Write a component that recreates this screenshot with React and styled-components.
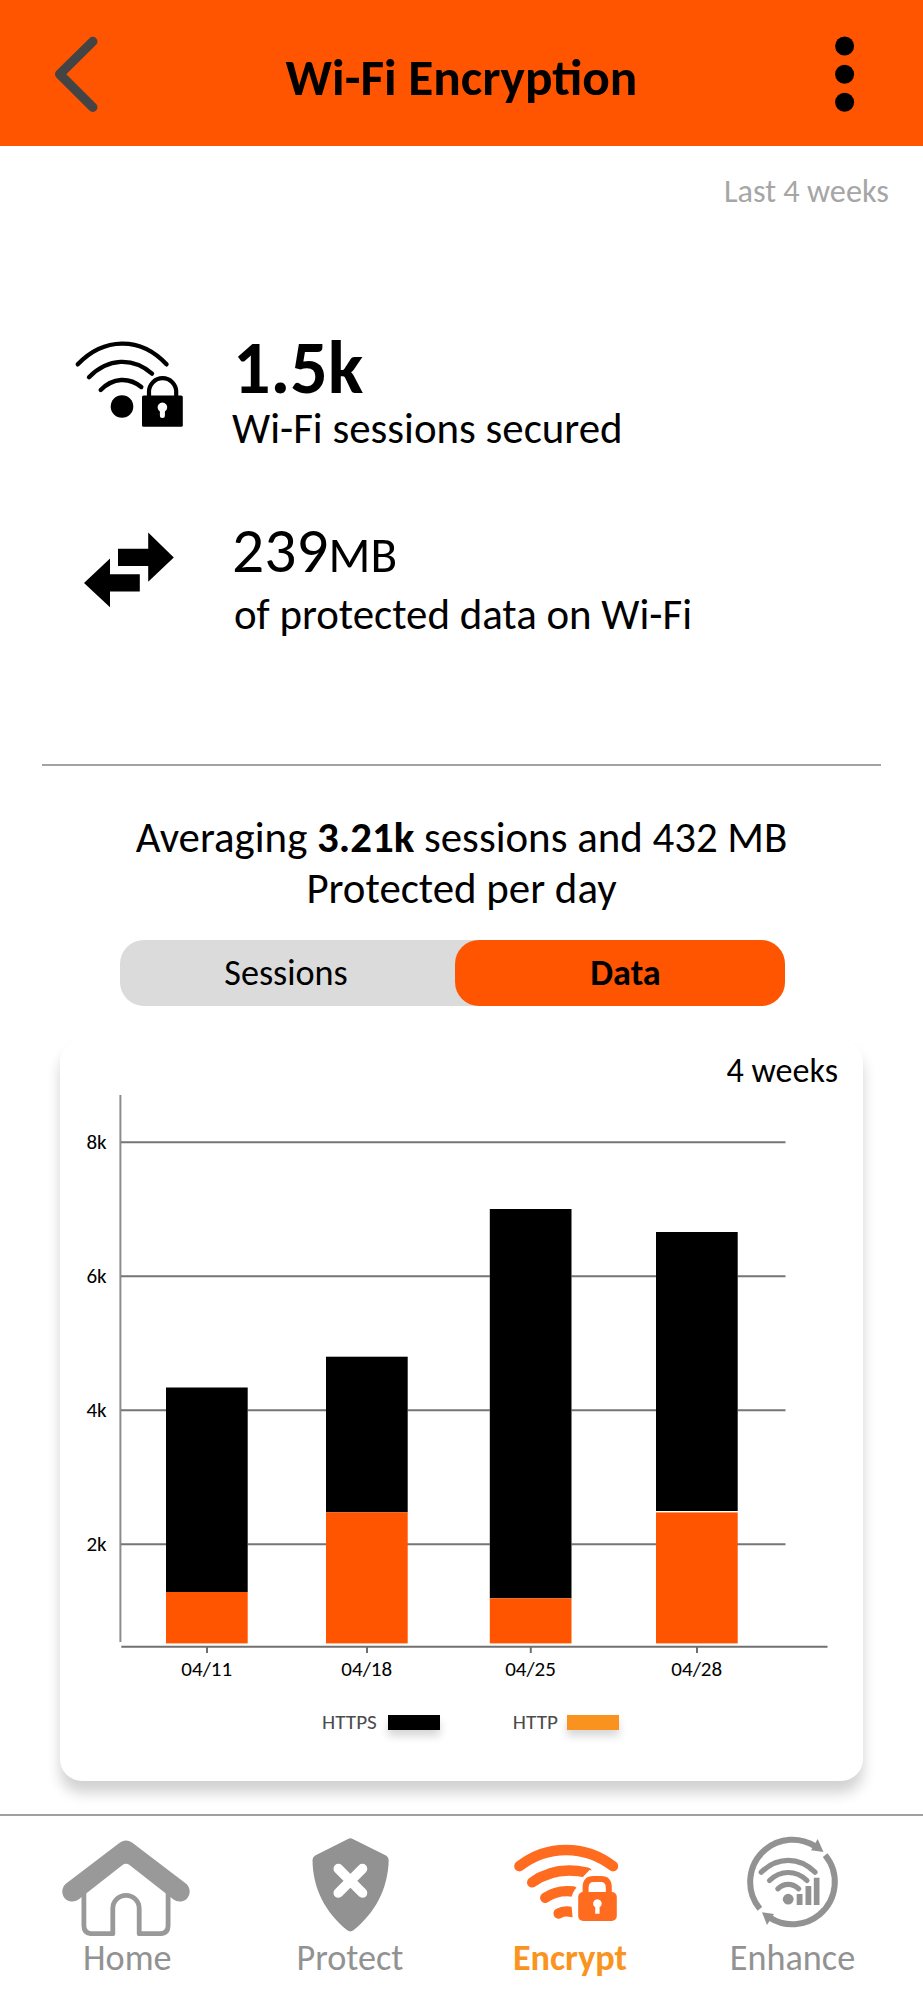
import React from "react";
import styled, { createGlobalStyle } from "styled-components";

const ORANGE = "#ff5500";
const GREY = "#929292";

const GlobalStyle = createGlobalStyle`
  * { box-sizing: border-box; }
  body {
    margin: 0;
    background: #fff;
    color: #000;
    font-family: Carlito, Calibri, Lato, sans-serif;
  }
`;

const Screen = styled.div`
  display: flex;
  flex-direction: column;
  width: 923px;
  height: 2000px;
  overflow: hidden;
`;

const Header = styled.header`
  display: grid;
  grid-template-columns: 110px 1fr 110px;
  height: 146px;
  background: ${ORANGE};
`;

const HeaderIcon = styled.svg`
  width: 110px;
  height: 146px;
`;

const Title = styled.h1`
  margin: 0;
  padding-top: 48px;
  text-align: center;
  font-size: 51.3px;
  line-height: 60px;
  font-weight: 700;
`;

const Period = styled.div`
  padding: 25px 34px 0 0;
  height: 104px;
  text-align: right;
  color: #a6a6a6;
  font-size: 32.3px;
  line-height: 40px;
`;

const Stats = styled.section`
  display: flex;
  flex-direction: column;
  height: 514px;
  padding: 70px 0 0 60px;
`;

const Stat = styled.div`
  display: grid;
  grid-template-columns: 172px 1fr;
  height: 186px;
`;

const StatIcon = styled.svg`
  width: 130px;
  height: 120px;
`;

const StatText = styled.div`
  display: flex;
  flex-direction: column;
`;

const StatValue = styled.div`
  height: 84px;
  line-height: 70px;
  padding: ${(p) => (p.$strong ? "13px 0 0 1px" : "10px 0 0 0")};
  font-size: ${(p) => (p.$strong ? 74 : 63.5)}px;
  font-weight: ${(p) => (p.$strong ? 700 : 400)};
`;

const Unit = styled.span`
  font-size: 49px;
`;

const StatLabel = styled.div`
  padding-left: ${(p) => p.$inset || 0}px;
  font-size: 42.9px;
  line-height: 50px;
`;

const Divider = styled.hr`
  width: 839px;
  height: 2px;
  margin: 0 0 0 42px;
  border: 0;
  background: #a3a3a3;
`;

const Summary = styled.p`
  margin: 46px 0 0;
  height: 128px;
  text-align: center;
  font-size: 42.9px;
  line-height: 51.3px;
`;

const Toggle = styled.div`
  display: flex;
  width: 665px;
  height: 66px;
  margin-left: 120px;
  border-radius: 24px;
  background: #dbdbdb;
`;

const ToggleOption = styled.button`
  flex: 0 0 ${(p) => (p.$active ? 330 : 335)}px;
  border: 0;
  border-radius: 24px;
  padding: ${(p) => (p.$active ? "0 0 0 11px" : "0 3px 0 0")};
  background: ${(p) => (p.$active ? ORANGE : "transparent")};
  color: #000;
  font-family: inherit;
  font-size: 36.2px;
  line-height: 66px;
  font-weight: ${(p) => (p.$active ? 700 : 400)};
`;

const Card = styled.section`
  width: 803px;
  height: 741px;
  margin: 34px 0 0 60px;
  border-radius: 22px;
  background: #fff;
  box-shadow: 0 12px 14px rgba(0, 0, 0, 0.18);
`;

const CardTitle = styled.div`
  height: 50px;
  padding: 10px 25px 0 0;
  text-align: right;
  font-size: 34.1px;
  line-height: 42px;
`;

const Plot = styled.svg`
  display: block;
  width: 803px;
  height: 600px;
  font-family: inherit;
  font-size: 21px;
`;

const Legend = styled.div`
  display: flex;
  align-items: center;
  gap: 73px;
  height: 64px;
  padding-left: 262px;
`;

const LegendItem = styled.div`
  display: flex;
  align-items: center;
  gap: ${(p) => p.$gap}px;
  color: #4c4c4c;
  font-size: 21.2px;
  line-height: 26px;
`;

const Swatch = styled.span`
  width: 52px;
  height: 15px;
  background: ${(p) => p.$color};
  box-shadow: 0 6px 9px rgba(0, 0, 0, 0.16);
`;

const NavBar = styled.nav`
  display: grid;
  grid-template-columns: 240px 220px 220px 225px;
  height: 186px;
  margin-top: 33px;
  border-top: 2px solid #a0a0a0;
`;

const NavItem = styled.a`
  display: flex;
  flex-direction: column;
  align-items: center;
  padding-left: ${(p) => p.$shift || 0}px;
  color: ${(p) => (p.$active ? "#fa9420" : GREY)};
  font-size: 36.2px;
  line-height: 44px;
  font-weight: ${(p) => (p.$active ? 700 : 400)};
`;

const NavIcon = styled.svg`
  width: 140px;
  height: 120px;
`;

const NavLabel = styled.span``;

/* Plot coordinates: origin is the plot's top-left corner inside the card. */
const GRID = [
  { label: "8k", y: 52 },
  { label: "6k", y: 186 },
  { label: "4k", y: 320 },
  { label: "2k", y: 454 },
];

const BARS = [
  { label: "04/11", x: 106, top: 297.5, blackEnd: 502, split: 502 },
  { label: "04/18", x: 266, top: 266.7, blackEnd: 422.3, split: 422.3 },
  { label: "04/25", x: 429.8, top: 119, blackEnd: 508.3, split: 508.3 },
  { label: "04/28", x: 596, top: 142, blackEnd: 421, split: 422.4 },
];

function Chart() {
  return (
    <Plot viewBox="0 0 803 600">
      <path d="M60.4 5V552" stroke="#8c8c8c" strokeWidth="2" />
      {GRID.map((g) => (
        <g key={g.label}>
          <path d={`M61 ${g.y + 0.3}H725.5`} stroke="#757575" strokeWidth="2.1" />
          <text x="46.6" y={g.y + 6.8} textAnchor="end">{g.label}</text>
        </g>
      ))}
      {BARS.map((b) => (
        <g key={b.label}>
          <rect x={b.x} y={b.top} width="81.7" height={b.split - b.top} fill="#fff" />
          <rect x={b.x} y={b.top} width="81.7" height={b.blackEnd - b.top} fill="#000" />
          <rect x={b.x} y={b.split} width="81.7" height={553.4 - b.split} fill={ORANGE} />
          <path d={`M${b.x + 41} 557V563`} stroke="#6f6f6f" strokeWidth="2" />
          <text x={b.x + 40.7} y="586" textAnchor="middle">{b.label}</text>
        </g>
      ))}
      <path d="M61.3 556.7H767.5" stroke="#707070" strokeWidth="2" />
    </Plot>
  );
}

function WifiLockIcon() {
  return (
    <StatIcon viewBox="60 320 130 120">
      <g fill="none" stroke="#000" strokeWidth="4.4" strokeLinecap="round">
        <path d="M77.8 364.3C103.5 337.5 140 336 166.5 364.3" />
        <path d="M89 377.2C108 357.8 133 357 152 373.6" />
        <path d="M100.7 390C113 377.5 129 377 141.3 387" />
        <path d="M149 397V391.8a13.6 13.6 0 0 1 27.2 0V397" strokeWidth="4.2" strokeLinecap="butt" />
      </g>
      <circle cx="122" cy="406.5" r="11.3" />
      <rect x="142" y="395.5" width="40.8" height="31.3" rx="1.6" />
      <path d="M159.9 411.4a4.8 4.8 0 1 1 5 0V415.5a2.5 2.5 0 0 1-5 0Z" fill="#fff" />
    </StatIcon>
  );
}

function TransferIcon() {
  return (
    <StatIcon viewBox="60 506 130 120">
      <path d="M118 548.7H148.2V532.5L173.8 557.4L148.2 581.7V566H118Z" />
      <path d="M139.8 574.3V591.6H110V607.3L84 583L110 558.6V574.3Z" />
    </StatIcon>
  );
}

function HomeIcon() {
  return (
    <NavIcon viewBox="56.5 1815.5 140 120">
      <path
        d="M83.4 1888V1926.5Q83.4 1934.7 91.6 1934.7H112.3V1909.5a13.2 13.2 0 0 1 26.4 0V1934.7H159.4Q167.6 1934.7 167.6 1926.5V1888"
        fill="none"
        stroke="#999"
        strokeWidth="4.8"
        strokeLinejoin="round"
        transform="translate(0 -1.5)"
      />
      <path
        d="M119.5 1842Q125.5 1837.8 131.5 1842L186 1883.5C190.5 1888 190 1894.5 186.2 1898.4C181.5 1902 176.5 1901.5 173 1899L129 1864.5Q125.5 1862.2 122 1864.5L78 1899C74.5 1901.5 69.5 1902 64.8 1898.4C61 1894.5 60.5 1888 65 1883.5Z"
        fill="#999"
      />
    </NavIcon>
  );
}

function ShieldIcon() {
  return (
    <NavIcon viewBox="280 1816 140 120">
      <path
        d="M348 1839Q350.4 1837.7 352.8 1839L386 1855.5Q388.7 1857 388.7 1860C388 1889 375 1913 353.5 1930.3Q350.4 1932.5 347.3 1930.3C325.8 1913 312.8 1889 312.5 1860Q312.5 1857 315.2 1855.5Z"
        fill={GREY}
      />
      <path d="M338.4 1868.7L362.4 1892.9M362.4 1868.7L338.4 1892.9" stroke="#fff" strokeWidth="9.8" strokeLinecap="round" />
    </NavIcon>
  );
}

function EncryptIcon() {
  return (
    <NavIcon viewBox="500 1816 140 120">
      <g fill="none" stroke="#ff6b1f" strokeWidth="10.4" strokeLinecap="round">
        <path d="M519.4 1866.2C547 1844.5 585 1844.5 613 1866.2" />
        <path d="M532.2 1882.4C549 1870 567 1868.2 587 1872.5" />
        <path d="M545.3 1897.8C555 1891 564 1890.3 573 1891.5" />
        <path d="M558.6 1913.5Q564 1910.3 572 1912" />
      </g>
      <path
        d="M589.5 1870L582 1878Q577.5 1882.5 577 1887Q572.5 1892 571.5 1897.5V1906L573 1921L594 1927L622 1925L620 1889L612 1873Z"
        fill="#fff"
      />
      <path d="M585.6 1894V1887.5Q585.6 1879 593.5 1879H601Q608.8 1879 608.8 1887.5V1894" fill="none" stroke="#ff6b1f" strokeWidth="6" />
      <rect x="578.2" y="1892" width="38.6" height="29" rx="5" fill="#ff6b1f" />
      <path d="M595.2 1907.3a4.3 4.3 0 1 1 4.4 0V1913.8H595.2Z" fill="#fff" />
    </NavIcon>
  );
}

function EnhanceIcon() {
  return (
    <NavIcon viewBox="722.5 1816 140 120">
      <g fill="none" stroke={GREY} strokeWidth="6">
        <circle cx="792" cy="1882" r="42.3" pathLength="360" strokeDasharray="161 199" transform="rotate(140.5 792 1882)" />
        <circle cx="792" cy="1882" r="42.3" pathLength="360" strokeDasharray="162 198" transform="rotate(-39.5 792 1882)" />
      </g>
      <path d="M817.2 1839L823 1852L810.5 1850.2Z" fill={GREY} />
      <path d="M761.5 1912.3L773.5 1914L766.5 1925Z" fill={GREY} />
      <g fill="none" stroke={GREY} strokeWidth="5.2" strokeLinecap="round">
        <path d="M760.7 1872.2C777 1856.5 798.5 1856.5 814.5 1872.2" />
        <path d="M769 1880.5C780 1869.8 795.5 1869.8 806.5 1880.5" />
        <path d="M777.3 1888.8C783.5 1882.8 792 1882.8 798.2 1888.8" />
      </g>
      <circle cx="787.7" cy="1899.2" r="5.4" fill={GREY} />
      <path d="M796.2 1894H802V1905H796.2ZM805 1886H810.8V1905H805ZM813.3 1877.7H819V1905H813.3Z" fill={GREY} />
    </NavIcon>
  );
}

export default function App() {
  return (
    <Screen>
      <GlobalStyle />
      <Header>
        <HeaderIcon viewBox="0 0 110 146">
          <path d="M92.8 41.5L59.7 74.2L92.8 107.3" fill="none" stroke="#444" strokeWidth="9.4" strokeLinecap="round" strokeLinejoin="round" />
        </HeaderIcon>
        <Title>Wi-Fi Encryption</Title>
        <HeaderIcon viewBox="813 0 110 146">
          <circle cx="844.6" cy="46" r="9.5" />
          <circle cx="844.6" cy="74.2" r="9.5" />
          <circle cx="844.6" cy="102.3" r="9.5" />
        </HeaderIcon>
      </Header>
      <Period>Last 4 weeks</Period>
      <Stats>
        <Stat>
          <WifiLockIcon />
          <StatText>
            <StatValue $strong>1.5k</StatValue>
            <StatLabel>Wi-Fi sessions secured</StatLabel>
          </StatText>
        </Stat>
        <Stat>
          <TransferIcon />
          <StatText>
            <StatValue>239<Unit>MB</Unit></StatValue>
            <StatLabel $inset={2}>of protected data on Wi-Fi</StatLabel>
          </StatText>
        </Stat>
      </Stats>
      <Divider />
      <Summary>
        Averaging <b>3.21k</b> sessions and 432 MB
        <br />
        Protected per day
      </Summary>
      <Toggle>
        <ToggleOption>Sessions</ToggleOption>
        <ToggleOption $active>Data</ToggleOption>
      </Toggle>
      <Card>
        <CardTitle>4 weeks</CardTitle>
        <Chart />
        <Legend>
          <LegendItem $gap={11}>HTTPS<Swatch $color="#000" /></LegendItem>
          <LegendItem $gap={9}>HTTP<Swatch $color="#f9921e" /></LegendItem>
        </Legend>
      </Card>
      <NavBar>
        <NavItem $shift={14.6}>
          <HomeIcon />
          <NavLabel>Home</NavLabel>
        </NavItem>
        <NavItem>
          <ShieldIcon />
          <NavLabel>Protect</NavLabel>
        </NavItem>
        <NavItem $active>
          <EncryptIcon />
          <NavLabel>Encrypt</NavLabel>
        </NavItem>
        <NavItem>
          <EnhanceIcon />
          <NavLabel>Enhance</NavLabel>
        </NavItem>
      </NavBar>
    </Screen>
  );
}
